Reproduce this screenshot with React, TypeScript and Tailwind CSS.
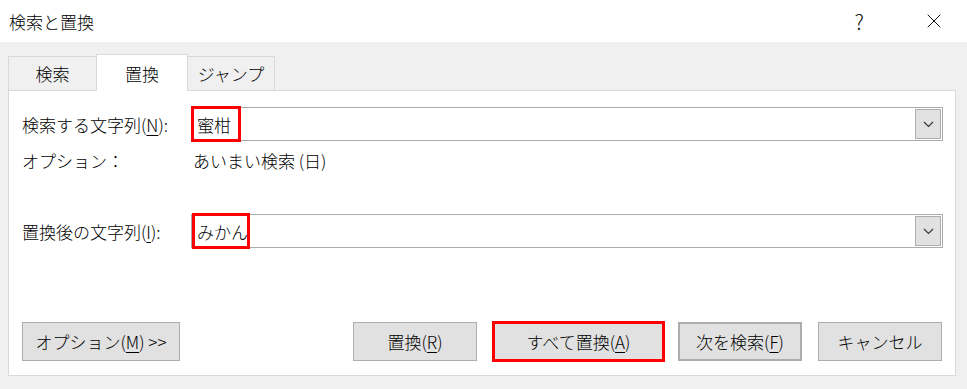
import { X } from 'lucide-react';

const jp = { fontFamily: '"Noto Sans CJK JP", "Noto Sans", sans-serif' };

function Key({ k }: { k: string }) {
  return <span className="underline underline-offset-[3px] decoration-1">{k}</span>;
}

function Chevron() {
  return (
    <svg width="11" height="7" viewBox="0 0 11 7" fill="none">
      <path d="M1 1l4.5 4.5L10 1" stroke="#333" strokeWidth="1.1" />
    </svg>
  );
}

function ComboInput({ children }: { children: React.ReactNode }) {
  return (
    <div className="relative flex-1 h-[34px] border border-[#ababab] bg-white flex items-center">
      {children}
      <div className="absolute right-[1px] top-[1px] bottom-[1px] w-[26px] bg-[#e1e1e1] border border-[#adadad] flex items-center justify-center">
        <Chevron />
      </div>
    </div>
  );
}

function Button({ children, className = '' }: { children: React.ReactNode; className?: string }) {
  return (
    <div
      className={`h-[39px] bg-[#e1e1e1] border border-[#adadad] flex items-center justify-center text-[17px] leading-none text-black ${className}`}
    >
      {children}
    </div>
  );
}

export default function App() {
  return (
    <div className="w-[967px] h-[389px] bg-[#f0f0f0] flex flex-col overflow-hidden text-black font-light" style={jp}>
      {/* title bar */}
      <div className="h-[42px] bg-white flex items-center pl-[9px] shrink-0">
        <span className="text-[17px] leading-none">検索と置換</span>
        <span className="ml-auto text-[21px] leading-none font-extralight text-[#111] mr-[58px]">?</span>
        <X size={24} strokeWidth={1} className="mr-[21px] text-[#111]" />
      </div>

      {/* tabs */}
      <div className="pt-[12px] px-[8px] flex items-end h-[48px] shrink-0">
        <div className="w-[88px] h-[34px] border-t border-l border-[#d9d9d9] flex items-center justify-center text-[17px] leading-none">
          検索
        </div>
        <div className="w-[92px] h-[37px] -mb-[1px] bg-white border-t border-l border-r border-[#d9d9d9] flex items-center justify-center text-[17px] leading-none relative z-10">
          置換
        </div>
        <div className="w-[87px] h-[34px] border-t border-r border-[#d9d9d9] flex items-center justify-center text-[17px] leading-none">
          ジャンプ
        </div>
      </div>

      {/* panel */}
      <div className="mx-[8px] w-[948px] h-[286px] bg-white border border-[#d9d9d9] pl-[13px] pr-[12px] flex flex-col text-[17px] leading-none">
        <div className="mt-[16px] h-[34px] flex items-center">
          <div className="w-[169px]">
            検索する文字列(<Key k="N" />):
          </div>
          <ComboInput>
            <span className="pl-[5px]">蜜柑</span>
            <div className="absolute -left-[1px] -top-[2px] w-[50px] h-[36px] border-[3px] border-[#ff0000]" />
          </ComboInput>
        </div>

        <div className="h-[38px] flex items-center">
          <div className="w-[171px]">オプション：</div>
          <div>あいまい検索 (日)</div>
        </div>

        <div className="mt-[35px] h-[34px] flex items-center">
          <div className="w-[169px]">
            置換後の文字列(<Key k="I" />):
          </div>
          <ComboInput>
            <span className="pl-[5px]">みかん</span>
            <span className="ml-[1px] w-[1px] h-[21px] bg-black" />
            <div className="absolute left-0 -top-[2px] w-[58px] h-[36px] border-[3px] border-[#ff0000]" />
          </ComboInput>
        </div>

        <div className="mt-[73px] h-[41px] flex items-center">
          <Button className="w-[158px]">
            オプション(<Key k="M" />) &gt;&gt;
          </Button>
          <Button className="w-[124px] ml-[173px]">
            置換(<Key k="R" />)
          </Button>
          <Button className="w-[173px] h-[41px] ml-[15px] border-[3px] border-[#ff0000]">
            すべて置換(<Key k="A" />)
          </Button>
          <Button className="w-[124px] ml-[13px] border-2 border-[#0078d7]">
            次を検索(<Key k="F" />)
          </Button>
          <Button className="w-[124px] ml-[16px]">キャンセル</Button>
        </div>
      </div>
    </div>
  );
}
